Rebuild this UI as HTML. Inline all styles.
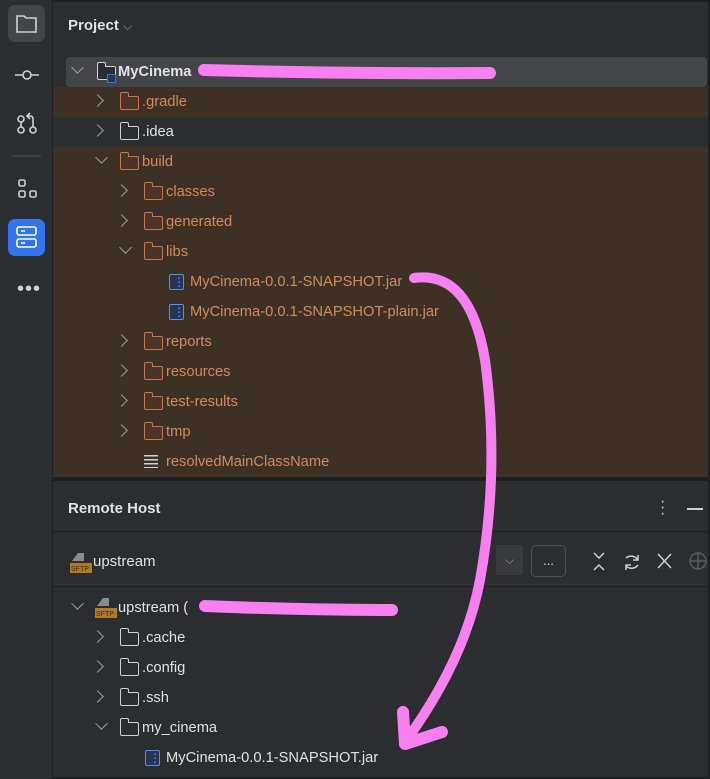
<!DOCTYPE html><html><head><style>
body{margin:0;width:710px;height:779px;background:#1e1f22;overflow:hidden;font-family:"Liberation Sans",sans-serif;position:relative}
.side{position:absolute;left:0;top:0;width:52px;height:779px;background:#2b2d30;border-right:1px solid #1e1f22}
.main{position:absolute;left:53px;top:2px;width:655px;height:775px;background:#2b2d30}
.wrap{position:absolute;left:0;top:2px;width:710px;height:777px}
.row{position:absolute;left:53px;width:655px;height:30px;font-size:14.7px;color:#dfe1e5;line-height:30px}
.br{background:#3d3126}
.o{color:#d4895a}
.ch{position:absolute;top:9px;width:8px;height:8px;border-right:1.5px solid #9a9ca0;border-bottom:1.5px solid #9a9ca0}
.r{transform:rotate(-45deg)}.d{transform:rotate(45deg);top:6px}
.f{position:absolute;top:9px;width:17px;height:12px;border:1.5px solid #c5774f;border-radius:2px;background:#4a3428}
.f:before{content:"";position:absolute;left:-1.5px;top:-5px;width:7px;height:4px;border:1.5px solid #c5774f;border-bottom:none;border-radius:2px 2px 0 0;background:#4a3428}
.g{border-color:#ced0d6;background:#2b2d30}.g:before{border-color:#ced0d6;background:#2b2d30}
.t{position:absolute}
.jar{position:absolute;top:7px;width:13px;height:14px;border:1.5px solid #5d8ae8;border-radius:2px;background:#24355a}
.jar:after{content:"⋮";position:absolute;left:3px;top:-8px;color:#7aa2f7;font-size:12px}
.line{position:absolute;left:53px;width:655px;height:1px;background:#1e1f22}
</style></head><body>
<div class="side">
<div style="position:absolute;left:8px;top:5px;width:37px;height:37px;background:#43454a;border-radius:7px"></div>
<svg width="52" height="300" style="position:absolute;left:0;top:0" fill="none" stroke="#ced0d6" stroke-width="1.6">
<path d="M17 16h7l2 2h10v14H17z"/>
<path d="M15 75h8M31 75h8"/><circle cx="27" cy="75" r="4"/>
<circle cx="21" cy="119" r="3"/><circle cx="21" cy="130" r="3"/><circle cx="33" cy="130" r="3"/><path d="M21 122v5M33 127v-8q0-3-3-3h-2M30 113l-3 3 3 3"/>
<path d="M12 156h29" stroke="#43454a"/>
<rect x="19" y="180" width="6" height="6" rx="1.5"/><rect x="19" y="191" width="6" height="6" rx="1.5"/><rect x="30" y="191" width="6" height="6" rx="1.5"/>
</svg>
<div style="position:absolute;left:8px;top:219px;width:37px;height:37px;background:#3574f0;border-radius:7px"></div>
<svg width="52" height="60" style="position:absolute;left:0;top:215px" fill="none" stroke="#fff" stroke-width="1.6"><rect x="17" y="12" width="19" height="8" rx="2"/><rect x="17" y="24" width="19" height="8" rx="2"/><path d="M21 16h4M21 28h4"/></svg>
<div style="position:absolute;left:17px;top:286px;color:#ced0d6;font-size:20px;letter-spacing:1px;line-height:6px">•••</div>
</div>
<div class="main"></div>
<div class="wrap">
<div class="t" style="left:68px;top:15px;font-size:15px;font-weight:bold;color:#dfe1e5">Project <span style="font-weight:normal;font-size:12px;color:#9a9ca0">⌵</span></div>
<div class="row" style="top:55px;left:66px;width:641px;background:#43454a;border-radius:4px"><span class="ch d" style="left:7px"></span><span class="f g" style="left:31px"></span><span style="position:absolute;left:41px;top:17px;width:7px;height:7px;border:1.5px solid #3574f0;background:#24355a;border-radius:1px"></span><b class="t" style="left:52px">MyCinema</b></div>
<div class="row br" style="top:85px"><span class="ch r" style="left:40px"></span><span class="f" style="left:67px"></span><span class="t o" style="left:89px">.gradle</span></div>
<div class="row" style="top:115px"><span class="ch r" style="left:40px"></span><span class="f g" style="left:67px"></span><span class="t" style="left:89px">.idea</span></div>
<div class="br" style="position:absolute;left:53px;top:145px;width:655px;height:330px"></div>
<div class="row" style="top:145px"><span class="ch d" style="left:44px"></span><span class="f" style="left:67px"></span><span class="t o" style="left:89px">build</span></div>
<div class="row" style="top:175px"><span class="ch r" style="left:64px"></span><span class="f" style="left:91px"></span><span class="t o" style="left:113px">classes</span></div>
<div class="row" style="top:205px"><span class="ch r" style="left:64px"></span><span class="f" style="left:91px"></span><span class="t o" style="left:113px">generated</span></div>
<div class="row" style="top:235px"><span class="ch d" style="left:68px"></span><span class="f" style="left:91px"></span><span class="t o" style="left:113px">libs</span></div>
<div class="row" style="top:265px"><span class="jar" style="left:116px"></span><span class="t o" style="left:137px">MyCinema-0.0.1-SNAPSHOT.jar</span></div>
<div class="row" style="top:295px"><span class="jar" style="left:116px"></span><span class="t o" style="left:137px">MyCinema-0.0.1-SNAPSHOT-plain.jar</span></div>
<div class="row" style="top:325px"><span class="ch r" style="left:64px"></span><span class="f" style="left:91px"></span><span class="t o" style="left:113px">reports</span></div>
<div class="row" style="top:355px"><span class="ch r" style="left:64px"></span><span class="f" style="left:91px"></span><span class="t o" style="left:113px">resources</span></div>
<div class="row" style="top:385px"><span class="ch r" style="left:64px"></span><span class="f" style="left:91px"></span><span class="t o" style="left:113px">test-results</span></div>
<div class="row" style="top:415px"><span class="ch r" style="left:64px"></span><span class="f" style="left:91px"></span><span class="t o" style="left:113px">tmp</span></div>
<div class="row" style="top:445px"><span class="t" style="left:91px;top:8px;width:14px;height:13px;background:repeating-linear-gradient(#ced0d6 0 1.5px,transparent 1.5px 4px)"></span><span class="t o" style="left:113px">resolvedMainClassName</span></div>
<div style="position:absolute;left:53px;top:475px;width:655px;height:4px;background:#1e1f22"></div>
<div class="t" style="left:68px;top:498px;font-size:15px;font-weight:bold;color:#dfe1e5">Remote Host</div>
<div class="t" style="left:660px;top:497px;color:#ced0d6;font-size:16px;line-height:6px">·<br>·<br>·</div>
<div class="t" style="left:687px;top:506px;width:16px;height:1.5px;background:#ced0d6"></div>
<div class="line" style="top:529px"></div>
<svg class="t" style="left:70px;top:551px" width="22" height="20"><path d="M8 0h6v8H2z" fill="#8a8c90"/><rect x="0" y="10" width="22" height="10" fill="#b07a2a"/><text x="1" y="18" font-size="7" fill="#3a2a10" font-family="Liberation Sans">SFTP</text></svg>
<div class="t" style="left:93px;top:551px;font-size:15px;color:#dfe1e5">upstream</div>
<div class="t" style="left:496px;top:543px;width:27px;height:30px;background:#393b40;border-radius:0 4px 4px 0;color:#9a9ca0;text-align:center;line-height:30px;font-size:12px">⌵</div>
<div class="t" style="left:531px;top:543px;width:33px;height:30px;border:1.5px solid #4e5157;border-radius:5px;color:#dfe1e5;text-align:center;line-height:30px;font-size:13px">...</div>
<svg class="t" style="left:590px;top:548px" width="120" height="24" fill="none" stroke="#ced0d6" stroke-width="1.5"><path d="M4 3l5 5 5-5M4 20l5-5 5 5"/><path d="M36 8a8 8 0 0 1 12 2M48 15a8 8 0 0 1-12 1M48 5v5h-5M36 20v-5h5"/><path d="M68 4l13 14M81 4L68 18"/><circle cx="108" cy="11" r="8" stroke="#5a5d63"/><path d="M100 11h16M108 3v16" stroke="#5a5d63"/></svg>
<div class="line" style="top:584px"></div>
<div class="row" style="top:591px"><span class="ch d" style="left:20px"></span><svg class="t" style="left:42px;top:5px" width="22" height="20"><path d="M8 0h6v8H2z" fill="#8a8c90"/><rect x="0" y="10" width="22" height="10" fill="#b07a2a"/><text x="1" y="18" font-size="7" fill="#3a2a10" font-family="Liberation Sans">SFTP</text></svg><span class="t" style="left:65px">upstream (</span></div>
<div class="row" style="top:621px"><span class="ch r" style="left:40px"></span><span class="f g" style="left:67px"></span><span class="t" style="left:89px">.cache</span></div>
<div class="row" style="top:651px"><span class="ch r" style="left:40px"></span><span class="f g" style="left:67px"></span><span class="t" style="left:89px">.config</span></div>
<div class="row" style="top:681px"><span class="ch r" style="left:40px"></span><span class="f g" style="left:67px"></span><span class="t" style="left:89px">.ssh</span></div>
<div class="row" style="top:711px"><span class="ch d" style="left:44px"></span><span class="f g" style="left:67px"></span><span class="t" style="left:89px">my_cinema</span></div>
<div class="row" style="top:741px"><span class="jar" style="left:92px"></span><span class="t" style="left:113px">MyCinema-0.0.1-SNAPSHOT.jar</span></div>
</div>
<svg class="t" style="left:0;top:0" width="710" height="779" fill="none" stroke="#f77ff0" stroke-linecap="round" stroke-linejoin="round">
<path d="M204 70Q350 74 490 73" stroke-width="12"/>
<path d="M205 606Q300 610 392 610" stroke-width="12"/>
<path d="M414 278Q470 270 485 360Q500 470 480 580Q465 660 405 742" stroke-width="10"/>
<path d="M403 712L405 744L442 732" stroke-width="12"/>
</svg>
</body></html>
